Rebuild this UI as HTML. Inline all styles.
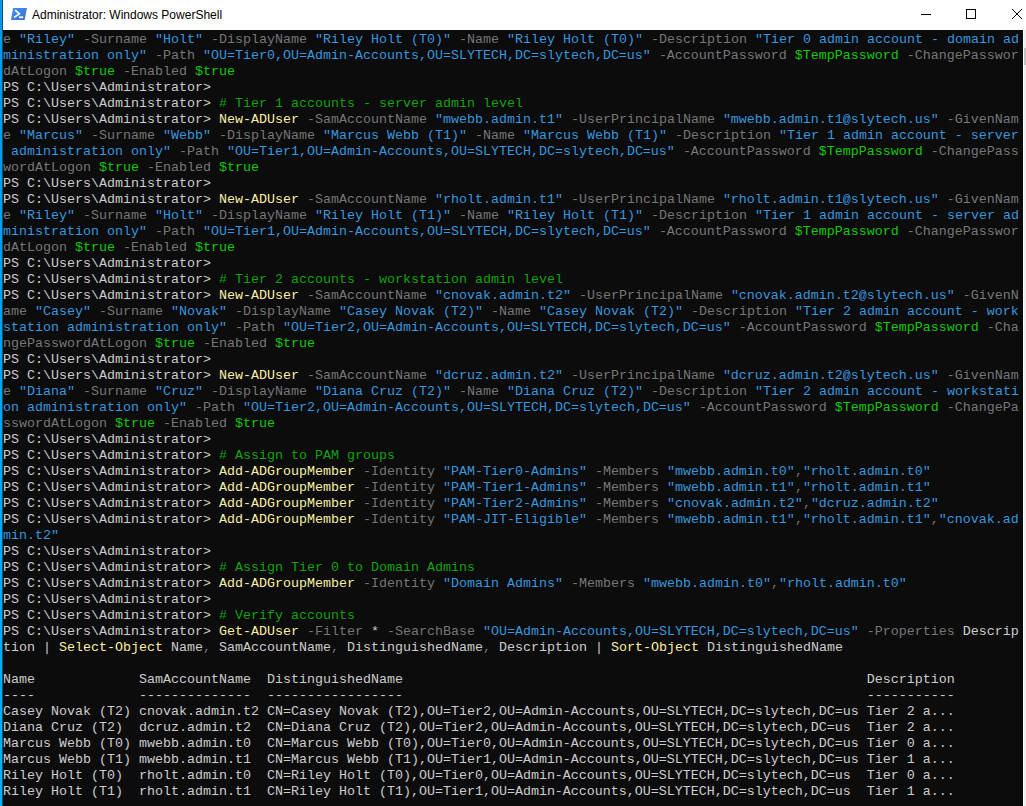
<!DOCTYPE html>
<html><head><meta charset="utf-8">
<style>
html,body{margin:0;padding:0;width:1026px;height:806px;overflow:hidden;background:#fff}
#con{position:absolute;left:0;top:30px;width:1023px;height:776px;background:#0c0c0c}
.l{position:absolute;left:3px;height:16px;line-height:16px;font-family:"Liberation Mono",monospace;font-size:13.333px;white-space:pre;color:#cccccc}
.s{color:#3a96dd}.p{color:#767676}.c{color:#f9f1a5}.v{color:#16c60c}.m{color:#13a10e}.o{color:#767676}
#title{position:absolute;left:0;top:0;width:1026px;height:30px;background:#fff}
#ttext{position:absolute;left:32px;top:8px;font-family:"Liberation Sans",sans-serif;font-size:12px;color:#000;white-space:pre}
#bord{position:absolute;left:0;top:0;width:2px;height:806px;background:linear-gradient(#0098eb,#00a6f5 50%,#00b2fc)}
#bord2{position:absolute;left:2px;top:0;width:1px;height:806px;background:#1a4a68}
#sbw{position:absolute;left:1023px;top:30px;width:1px;height:776px;background:#fff}
#sb{position:absolute;left:1024px;top:30px;width:2px;height:776px;background:#efefef}
#thumb{position:absolute;left:1024px;top:48px;width:2px;height:17px;background:#c2c2c2}
svg{position:absolute;left:0;top:0}
</style></head><body>
<div id="title"><div id="ttext">Administrator: Windows PowerShell</div></div>
<svg width="1026" height="30" viewBox="0 0 1026 30">
<defs><linearGradient id="g" x1="0" y1="0" x2="1" y2="1"><stop offset="0" stop-color="#4592f0"/><stop offset="1" stop-color="#386cd0"/></linearGradient></defs>
<path d="M13.1 8 L27 8 L24.6 20 L11 20 Z" fill="url(#g)"/>
<path d="M15.2 10.2 L19.4 13.8 L14 17.4" fill="none" stroke="#fff" stroke-width="1.6" stroke-linejoin="miter"/>
<rect x="19" y="16.4" width="4.2" height="1.7" fill="#fff"/>
<rect x="921" y="14" width="10" height="1" fill="#000"/>
<rect x="966.5" y="9.5" width="9" height="9" fill="none" stroke="#000" stroke-width="1"/>
<path d="M1012 9 L1022 19 M1022 9 L1012 19" stroke="#000" stroke-width="1"/>
</svg>
<div id="con"></div>
<div class="l" style="top:32px"><span class="p">e</span> <span class="s">&quot;Riley&quot;</span> <span class="p">-Surname</span> <span class="s">&quot;Holt&quot;</span> <span class="p">-DisplayName</span> <span class="s">&quot;Riley Holt (T0)&quot;</span> <span class="p">-Name</span> <span class="s">&quot;Riley Holt (T0)&quot;</span> <span class="p">-Description</span> <span class="s">&quot;Tier 0 admin account - domain ad</span></div>
<div class="l" style="top:48px"><span class="s">ministration only&quot;</span> <span class="p">-Path</span> <span class="s">&quot;OU=Tier0,OU=Admin-Accounts,OU=SLYTECH,DC=slytech,DC=us&quot;</span> <span class="p">-AccountPassword</span> <span class="v">$TempPassword</span> <span class="p">-ChangePasswor</span></div>
<div class="l" style="top:64px"><span class="p">dAtLogon</span> <span class="v">$true</span> <span class="p">-Enabled</span> <span class="v">$true</span></div>
<div class="l" style="top:80px">PS C:\Users\Administrator&gt;</div>
<div class="l" style="top:96px">PS C:\Users\Administrator&gt; <span class="m"># Tier 1 accounts - server admin level</span></div>
<div class="l" style="top:112px">PS C:\Users\Administrator&gt; <span class="c">New-ADUser</span> <span class="p">-SamAccountName</span> <span class="s">&quot;mwebb.admin.t1&quot;</span> <span class="p">-UserPrincipalName</span> <span class="s">&quot;mwebb.admin.t1@slytech.us&quot;</span> <span class="p">-GivenNam</span></div>
<div class="l" style="top:128px"><span class="p">e</span> <span class="s">&quot;Marcus&quot;</span> <span class="p">-Surname</span> <span class="s">&quot;Webb&quot;</span> <span class="p">-DisplayName</span> <span class="s">&quot;Marcus Webb (T1)&quot;</span> <span class="p">-Name</span> <span class="s">&quot;Marcus Webb (T1)&quot;</span> <span class="p">-Description</span> <span class="s">&quot;Tier 1 admin account - server</span></div>
<div class="l" style="top:144px"><span class="s"> administration only&quot;</span> <span class="p">-Path</span> <span class="s">&quot;OU=Tier1,OU=Admin-Accounts,OU=SLYTECH,DC=slytech,DC=us&quot;</span> <span class="p">-AccountPassword</span> <span class="v">$TempPassword</span> <span class="p">-ChangePass</span></div>
<div class="l" style="top:160px"><span class="p">wordAtLogon</span> <span class="v">$true</span> <span class="p">-Enabled</span> <span class="v">$true</span></div>
<div class="l" style="top:176px">PS C:\Users\Administrator&gt;</div>
<div class="l" style="top:192px">PS C:\Users\Administrator&gt; <span class="c">New-ADUser</span> <span class="p">-SamAccountName</span> <span class="s">&quot;rholt.admin.t1&quot;</span> <span class="p">-UserPrincipalName</span> <span class="s">&quot;rholt.admin.t1@slytech.us&quot;</span> <span class="p">-GivenNam</span></div>
<div class="l" style="top:208px"><span class="p">e</span> <span class="s">&quot;Riley&quot;</span> <span class="p">-Surname</span> <span class="s">&quot;Holt&quot;</span> <span class="p">-DisplayName</span> <span class="s">&quot;Riley Holt (T1)&quot;</span> <span class="p">-Name</span> <span class="s">&quot;Riley Holt (T1)&quot;</span> <span class="p">-Description</span> <span class="s">&quot;Tier 1 admin account - server ad</span></div>
<div class="l" style="top:224px"><span class="s">ministration only&quot;</span> <span class="p">-Path</span> <span class="s">&quot;OU=Tier1,OU=Admin-Accounts,OU=SLYTECH,DC=slytech,DC=us&quot;</span> <span class="p">-AccountPassword</span> <span class="v">$TempPassword</span> <span class="p">-ChangePasswor</span></div>
<div class="l" style="top:240px"><span class="p">dAtLogon</span> <span class="v">$true</span> <span class="p">-Enabled</span> <span class="v">$true</span></div>
<div class="l" style="top:256px">PS C:\Users\Administrator&gt;</div>
<div class="l" style="top:272px">PS C:\Users\Administrator&gt; <span class="m"># Tier 2 accounts - workstation admin level</span></div>
<div class="l" style="top:288px">PS C:\Users\Administrator&gt; <span class="c">New-ADUser</span> <span class="p">-SamAccountName</span> <span class="s">&quot;cnovak.admin.t2&quot;</span> <span class="p">-UserPrincipalName</span> <span class="s">&quot;cnovak.admin.t2@slytech.us&quot;</span> <span class="p">-GivenN</span></div>
<div class="l" style="top:304px"><span class="p">ame</span> <span class="s">&quot;Casey&quot;</span> <span class="p">-Surname</span> <span class="s">&quot;Novak&quot;</span> <span class="p">-DisplayName</span> <span class="s">&quot;Casey Novak (T2)&quot;</span> <span class="p">-Name</span> <span class="s">&quot;Casey Novak (T2)&quot;</span> <span class="p">-Description</span> <span class="s">&quot;Tier 2 admin account - work</span></div>
<div class="l" style="top:320px"><span class="s">station administration only&quot;</span> <span class="p">-Path</span> <span class="s">&quot;OU=Tier2,OU=Admin-Accounts,OU=SLYTECH,DC=slytech,DC=us&quot;</span> <span class="p">-AccountPassword</span> <span class="v">$TempPassword</span> <span class="p">-Cha</span></div>
<div class="l" style="top:336px"><span class="p">ngePasswordAtLogon</span> <span class="v">$true</span> <span class="p">-Enabled</span> <span class="v">$true</span></div>
<div class="l" style="top:352px">PS C:\Users\Administrator&gt;</div>
<div class="l" style="top:368px">PS C:\Users\Administrator&gt; <span class="c">New-ADUser</span> <span class="p">-SamAccountName</span> <span class="s">&quot;dcruz.admin.t2&quot;</span> <span class="p">-UserPrincipalName</span> <span class="s">&quot;dcruz.admin.t2@slytech.us&quot;</span> <span class="p">-GivenNam</span></div>
<div class="l" style="top:384px"><span class="p">e</span> <span class="s">&quot;Diana&quot;</span> <span class="p">-Surname</span> <span class="s">&quot;Cruz&quot;</span> <span class="p">-DisplayName</span> <span class="s">&quot;Diana Cruz (T2)&quot;</span> <span class="p">-Name</span> <span class="s">&quot;Diana Cruz (T2)&quot;</span> <span class="p">-Description</span> <span class="s">&quot;Tier 2 admin account - workstati</span></div>
<div class="l" style="top:400px"><span class="s">on administration only&quot;</span> <span class="p">-Path</span> <span class="s">&quot;OU=Tier2,OU=Admin-Accounts,OU=SLYTECH,DC=slytech,DC=us&quot;</span> <span class="p">-AccountPassword</span> <span class="v">$TempPassword</span> <span class="p">-ChangePa</span></div>
<div class="l" style="top:416px"><span class="p">sswordAtLogon</span> <span class="v">$true</span> <span class="p">-Enabled</span> <span class="v">$true</span></div>
<div class="l" style="top:432px">PS C:\Users\Administrator&gt;</div>
<div class="l" style="top:448px">PS C:\Users\Administrator&gt; <span class="m"># Assign to PAM groups</span></div>
<div class="l" style="top:464px">PS C:\Users\Administrator&gt; <span class="c">Add-ADGroupMember</span> <span class="p">-Identity</span> <span class="s">&quot;PAM-Tier0-Admins&quot;</span> <span class="p">-Members</span> <span class="s">&quot;mwebb.admin.t0&quot;</span><span class="o">,</span><span class="s">&quot;rholt.admin.t0&quot;</span></div>
<div class="l" style="top:480px">PS C:\Users\Administrator&gt; <span class="c">Add-ADGroupMember</span> <span class="p">-Identity</span> <span class="s">&quot;PAM-Tier1-Admins&quot;</span> <span class="p">-Members</span> <span class="s">&quot;mwebb.admin.t1&quot;</span><span class="o">,</span><span class="s">&quot;rholt.admin.t1&quot;</span></div>
<div class="l" style="top:496px">PS C:\Users\Administrator&gt; <span class="c">Add-ADGroupMember</span> <span class="p">-Identity</span> <span class="s">&quot;PAM-Tier2-Admins&quot;</span> <span class="p">-Members</span> <span class="s">&quot;cnovak.admin.t2&quot;</span><span class="o">,</span><span class="s">&quot;dcruz.admin.t2&quot;</span></div>
<div class="l" style="top:512px">PS C:\Users\Administrator&gt; <span class="c">Add-ADGroupMember</span> <span class="p">-Identity</span> <span class="s">&quot;PAM-JIT-Eligible&quot;</span> <span class="p">-Members</span> <span class="s">&quot;mwebb.admin.t1&quot;</span><span class="o">,</span><span class="s">&quot;rholt.admin.t1&quot;</span><span class="o">,</span><span class="s">&quot;cnovak.ad</span></div>
<div class="l" style="top:528px"><span class="s">min.t2&quot;</span></div>
<div class="l" style="top:544px">PS C:\Users\Administrator&gt;</div>
<div class="l" style="top:560px">PS C:\Users\Administrator&gt; <span class="m"># Assign Tier 0 to Domain Admins</span></div>
<div class="l" style="top:576px">PS C:\Users\Administrator&gt; <span class="c">Add-ADGroupMember</span> <span class="p">-Identity</span> <span class="s">&quot;Domain Admins&quot;</span> <span class="p">-Members</span> <span class="s">&quot;mwebb.admin.t0&quot;</span><span class="o">,</span><span class="s">&quot;rholt.admin.t0&quot;</span></div>
<div class="l" style="top:592px">PS C:\Users\Administrator&gt;</div>
<div class="l" style="top:608px">PS C:\Users\Administrator&gt; <span class="m"># Verify accounts</span></div>
<div class="l" style="top:624px">PS C:\Users\Administrator&gt; <span class="c">Get-ADUser</span> <span class="p">-Filter</span> * <span class="p">-SearchBase</span> <span class="s">&quot;OU=Admin-Accounts,OU=SLYTECH,DC=slytech,DC=us&quot;</span> <span class="p">-Properties</span> Descrip</div>
<div class="l" style="top:640px">tion | <span class="c">Select-Object</span> Name<span class="o">,</span> SamAccountName<span class="o">,</span> DistinguishedName<span class="o">,</span> Description | <span class="c">Sort-Object</span> DistinguishedName</div>
<div class="l" style="top:656px"></div>
<div class="l" style="top:672px">Name             SamAccountName  DistinguishedName                                                          Description</div>
<div class="l" style="top:688px">----             --------------  -----------------                                                          -----------</div>
<div class="l" style="top:704px">Casey Novak (T2) cnovak.admin.t2 CN=Casey Novak (T2),OU=Tier2,OU=Admin-Accounts,OU=SLYTECH,DC=slytech,DC=us Tier 2 a...</div>
<div class="l" style="top:720px">Diana Cruz (T2)  dcruz.admin.t2  CN=Diana Cruz (T2),OU=Tier2,OU=Admin-Accounts,OU=SLYTECH,DC=slytech,DC=us  Tier 2 a...</div>
<div class="l" style="top:736px">Marcus Webb (T0) mwebb.admin.t0  CN=Marcus Webb (T0),OU=Tier0,OU=Admin-Accounts,OU=SLYTECH,DC=slytech,DC=us Tier 0 a...</div>
<div class="l" style="top:752px">Marcus Webb (T1) mwebb.admin.t1  CN=Marcus Webb (T1),OU=Tier1,OU=Admin-Accounts,OU=SLYTECH,DC=slytech,DC=us Tier 1 a...</div>
<div class="l" style="top:768px">Riley Holt (T0)  rholt.admin.t0  CN=Riley Holt (T0),OU=Tier0,OU=Admin-Accounts,OU=SLYTECH,DC=slytech,DC=us  Tier 0 a...</div>
<div class="l" style="top:784px">Riley Holt (T1)  rholt.admin.t1  CN=Riley Holt (T1),OU=Tier1,OU=Admin-Accounts,OU=SLYTECH,DC=slytech,DC=us  Tier 1 a...</div>
<div id="sbw"></div><div id="sb"></div><div id="thumb"></div>
<div id="bord"></div><div id="bord2"></div>
</body></html>
